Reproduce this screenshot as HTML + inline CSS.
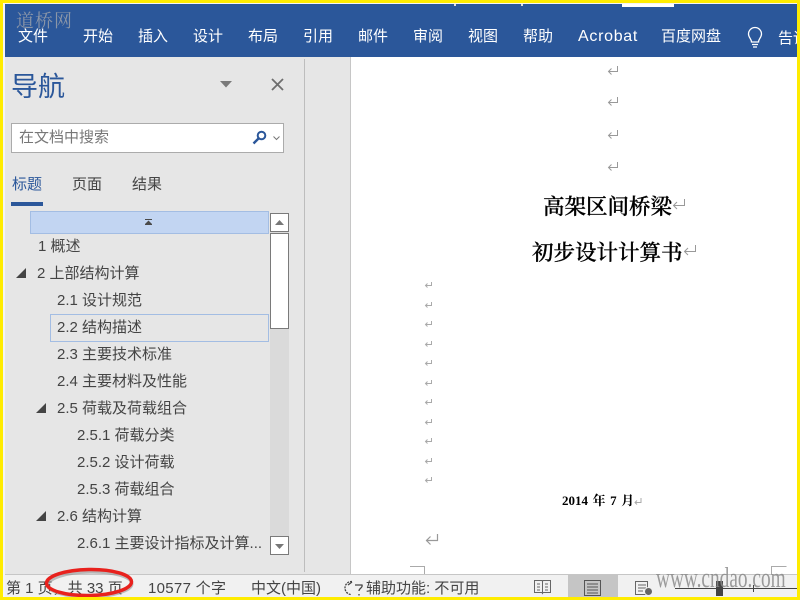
<!DOCTYPE html>
<html><head><meta charset="utf-8">
<style>
*{box-sizing:border-box;margin:0;padding:0}
html,body{width:800px;height:600px;overflow:hidden;background:#fff}
body{position:relative;font-family:"Liberation Sans","Noto Sans CJK SC",sans-serif;color:#444}
.a{position:absolute;white-space:nowrap}
.r{top:28px;font-size:15px;line-height:18px;color:#fff}
.t{font-size:15px;line-height:18px;color:#444;margin-top:1px}
.s{top:580px;font-size:15px;line-height:18px;color:#444}
.doc{font-family:"Liberation Serif","Noto Serif CJK SC",serif;color:#000}
svg{position:absolute;overflow:visible}
</style></head><body>

<!-- ribbon -->
<div class="a" style="left:5px;top:4px;width:792px;height:53px;background:#2b579a"></div>
<div class="a" style="left:622px;top:4px;width:52px;height:3px;background:#fff"></div>
<div class="a" style="left:454px;top:4px;width:2px;height:2px;background:#ddd"></div>
<div class="a" style="left:521px;top:4px;width:2px;height:2px;background:#ddd"></div>
<div class="a" style="left:16px;top:9px;font:18px/22px 'Noto Serif CJK SC',serif;color:#8b96a8;letter-spacing:1px">道桥网</div>
<div class="a r" style="left:18px">文件</div>
<div class="a r" style="left:83px">开始</div>
<div class="a r" style="left:138px">插入</div>
<div class="a r" style="left:193px">设计</div>
<div class="a r" style="left:248px">布局</div>
<div class="a r" style="left:303px">引用</div>
<div class="a r" style="left:358px">邮件</div>
<div class="a r" style="left:413px">审阅</div>
<div class="a r" style="left:468px">视图</div>
<div class="a r" style="left:523px">帮助</div>
<div class="a r" style="left:578px;font-size:16px;letter-spacing:.7px">Acrobat</div>
<div class="a r" style="left:661px">百度网盘</div>
<svg style="left:746px;top:27px" width="18" height="22" viewBox="0 0 18 22" fill="none" stroke="#fff" stroke-width="1.3"><path d="M5.5 15c0-3-3-4.500-3-8a6.500 6.500 0 0 1 13 0c0 3.500-3 5-3 8z"/><path d="M6 17.500h6M7 20h4"/></svg>
<div class="a r" style="left:778px;top:30px;width:19px;overflow:hidden">告诉</div>

<!-- nav pane -->
<div class="a" style="left:5px;top:57px;width:346px;height:517px;background:#e6e6e6"></div>
<div class="a" style="left:304px;top:59px;width:1px;height:513px;background:#bdbdbd"></div>
<div class="a" style="left:350px;top:57px;width:1px;height:517px;background:#c6c6c6"></div>
<div class="a" style="left:11px;top:70px;font-size:27px;line-height:34px;color:#2b579a">导航</div>
<svg style="left:220px;top:81px" width="12" height="7"><path d="M0 0h12L6 6.500z" fill="#7a7a7a"/></svg>
<svg style="left:271px;top:78px" width="13" height="13" fill="none" stroke="#6e6e6e" stroke-width="1.800"><path d="M1 1l11 11M12 1L1 12"/></svg>

<div class="a" style="left:11px;top:123px;width:273px;height:30px;background:#fff;border:1px solid #ababab"></div>
<div class="a" style="left:19px;top:128px;font-size:15px;line-height:20px;color:#777">在文档中搜索</div>
<svg style="left:252px;top:130px" width="16" height="15" fill="none" stroke="#2b579a"><circle cx="9.500" cy="5.500" r="3.800" stroke-width="2"/><path d="M6.500 8.500L1.500 13.500" stroke-width="2.400"/></svg>
<svg style="left:273px;top:136px" width="7" height="5" fill="none" stroke="#777"><path d="M.5.500L3.500 3.500 6.500.500"/></svg>

<div class="a" style="left:12px;top:176px;font-size:15px;line-height:18px;color:#2b579a">标题</div>
<div class="a" style="left:72px;top:176px;font-size:15px;line-height:18px;color:#444">页面</div>
<div class="a" style="left:132px;top:176px;font-size:15px;line-height:18px;color:#444">结果</div>
<div class="a" style="left:11px;top:202px;width:32px;height:4px;background:#2b579a"></div>

<!-- list -->
<div class="a" style="left:30px;top:211px;width:239px;height:23px;background:#c2d5f2;border:1px solid #a3bde3"></div>
<svg style="left:145px;top:219px" width="7" height="6"><path d="M0 0h7v1H0zM3.500 1.500L7 5H0zM0 5h7v1H0z" fill="#4a4a4a"/></svg>
<div class="a" style="left:50px;top:314px;width:219px;height:28px;border:1px solid #a3bde3"></div>

<div class="a t" style="left:38px;top:237px">1 概述</div>
<svg style="left:16px;top:268px" width="10" height="10"><path d="M10 0v10H0z" fill="#444"/></svg>
<div class="a t" style="left:37px;top:264px">2 上部结构计算</div>
<div class="a t" style="left:57px;top:291px">2.1 设计规范</div>
<div class="a t" style="left:57px;top:318px">2.2 结构描述</div>
<div class="a t" style="left:57px;top:345px">2.3 主要技术标准</div>
<div class="a t" style="left:57px;top:372px">2.4 主要材料及性能</div>
<svg style="left:36px;top:403px" width="10" height="10"><path d="M10 0v10H0z" fill="#444"/></svg>
<div class="a t" style="left:57px;top:399px">2.5 荷载及荷载组合</div>
<div class="a t" style="left:77px;top:426px">2.5.1 荷载分类</div>
<div class="a t" style="left:77px;top:453px">2.5.2 设计荷载</div>
<div class="a t" style="left:77px;top:480px">2.5.3 荷载组合</div>
<svg style="left:36px;top:511px" width="10" height="10"><path d="M10 0v10H0z" fill="#444"/></svg>
<div class="a t" style="left:57px;top:507px">2.6 结构计算</div>
<div class="a t" style="left:77px;top:534px">2.6.1 主要设计指标及计算...</div>

<!-- scrollbar -->
<div class="a" style="left:270px;top:213px;width:19px;height:342px;background:#dadada"></div>
<div class="a" style="left:270px;top:213px;width:19px;height:19px;background:#fff;border:1px solid #7a7a7a"></div>
<svg style="left:275px;top:220px" width="9" height="5"><path d="M0 5L4.500 0 9 5z" fill="#777"/></svg>
<div class="a" style="left:270px;top:233px;width:19px;height:96px;background:#fff;border:1px solid #7a7a7a"></div>
<div class="a" style="left:270px;top:536px;width:19px;height:19px;background:#fff;border:1px solid #7a7a7a"></div>
<svg style="left:275px;top:544px" width="9" height="5"><path d="M0 0L4.500 5 9 0z" fill="#777"/></svg>

<!-- document -->
<svg style="left:607px;top:66px" width="12" height="10" fill="none" stroke="#999" stroke-width="1"><path d="M10.500 0v5.500H1.500M4.500 2.500L1.500 5.500l3 3"/></svg>
<svg style="left:607px;top:97px" width="12" height="10" fill="none" stroke="#999" stroke-width="1"><path d="M10.500 0v5.500H1.500M4.500 2.500L1.500 5.500l3 3"/></svg>
<svg style="left:607px;top:130px" width="12" height="10" fill="none" stroke="#999" stroke-width="1"><path d="M10.500 0v5.500H1.500M4.500 2.500L1.500 5.500l3 3"/></svg>
<svg style="left:607px;top:162px" width="12" height="10" fill="none" stroke="#999" stroke-width="1"><path d="M10.500 0v5.500H1.500M4.500 2.500L1.500 5.500l3 3"/></svg>

<div class="a doc" style="left:543px;top:193px;font-size:21.500px;line-height:28px;font-weight:500;-webkit-text-stroke:.35px #000">高架区间桥梁</div>
<svg style="left:672px;top:199px" width="14" height="12" fill="none" stroke="#999" stroke-width="1"><path d="M12.500 0v6.500H1.500M5 3L1.500 6.500 5 10"/></svg>
<div class="a doc" style="left:532px;top:239px;font-size:21.500px;line-height:28px;font-weight:500;-webkit-text-stroke:.35px #000">初步设计计算书</div>
<svg style="left:683px;top:245px" width="14" height="12" fill="none" stroke="#999" stroke-width="1"><path d="M12.500 0v6.500H1.500M5 3L1.500 6.500 5 10"/></svg>

<svg style="left:425px;top:1px" width="8" height="500" fill="none" stroke="#aaa" stroke-width="1"><path d="M6.500 281v3.500H.500M2.500 282.500l-2 2 2 2M6.500 301v3.500H.500M2.500 302.500l-2 2 2 2M6.500 320v3.500H.500M2.500 321.500l-2 2 2 2M6.500 340v3.500H.500M2.500 341.500l-2 2 2 2M6.500 359v3.500H.500M2.500 360.500l-2 2 2 2M6.500 379v3.500H.500M2.500 380.500l-2 2 2 2M6.500 398v3.500H.500M2.500 399.500l-2 2 2 2M6.500 418v3.500H.500M2.500 419.500l-2 2 2 2M6.500 437v3.500H.500M2.500 438.500l-2 2 2 2M6.500 457v3.500H.500M2.500 458.500l-2 2 2 2M6.500 476v3.500H.500M2.500 477.500l-2 2 2 2"/></svg>

<div class="a doc" style="left:562px;top:493px;font-size:13px;line-height:16px;font-weight:700;word-spacing:1.300px">2014 年 7 月</div>
<svg style="left:634px;top:498px" width="8" height="8" fill="none" stroke="#aaa"><path d="M7 0v4.500H1M3 2.500L1 4.500l2 2"/></svg>
<svg style="left:425px;top:534px" width="14" height="12" fill="none" stroke="#999" stroke-width="1.200"><path d="M12.500 0v6.500H1M5.500 2.500L1.500 6.500l4 4"/></svg>
<svg style="left:410px;top:566px" width="16" height="8" fill="none" stroke="#aaa"><path d="M0 .500h14.500V8"/></svg>
<svg style="left:771px;top:566px" width="16" height="8" fill="none" stroke="#aaa"><path d="M15.500 .500H.500V8"/></svg>

<!-- status bar -->
<div class="a" style="left:5px;top:574px;width:792px;height:23px;background:#f1f1f1;border-top:1px solid #c6c6c6"></div>
<div class="a s" style="left:6px">第 1 页，共 33 页</div>
<div class="a s" style="left:148px;letter-spacing:.3px">10577 个字</div>
<div class="a s" style="left:251px">中文(中国)</div>
<svg style="left:345px;top:580px" width="19" height="17" fill="none" stroke="#444" stroke-width="1.300"><path d="M7 1.500a6.500 6.500 0 0 0-1 13" stroke-dasharray="2 1"/><path d="M3 5l4-3M10 5h7c1 3-3 3-3 6M14 14v1.500"/></svg>
<div class="a s" style="left:366px">辅助功能: 不可用</div>
<svg style="left:534px;top:580px" width="17" height="15" fill="none" stroke="#666"><path d="M.500 .500h7.500l.500 1 .500-1h7.500v12H9l-.500 1-.500-1H.500zM8.500 1.500v11M3 4h3M3 7h3M3 10h3M11 4h3M11 7h3M11 10h3"/></svg>
<div class="a" style="left:568px;top:575px;width:50px;height:22px;background:#c5c5c5"></div>
<svg style="left:584px;top:580px" width="17" height="16" fill="none" stroke="#555"><path d="M.500 .500h16v15H.500zM3 4h11M3 7h11M3 10h11M3 13h11"/></svg>
<svg style="left:635px;top:581px" width="18" height="15" fill="none" stroke="#666"><path d="M.500 .500h12v13H.500zM3 4h8M3 7h8M3 10h5"/><circle cx="13.500" cy="10.500" r="4" fill="#666" stroke="#f1f1f1"/></svg>
<div class="a" style="left:675px;top:588px;width:122px;height:1px;background:#444"></div>
<div class="a" style="left:716px;top:581px;width:7px;height:15px;background:#444"></div>
<div class="a" style="left:753px;top:585px;width:1px;height:7px;background:#444"></div>
<div class="a" style="left:656px;top:562px;font:28px/34px 'Liberation Serif',serif;color:#8b8b8b;transform:scaleX(.69);transform-origin:0 0;opacity:.85">www.cndao.com</div>

<!-- red ellipse -->
<svg style="left:0;top:0" width="800" height="600" fill="none"><ellipse cx="90" cy="584.500" rx="42" ry="12.500" stroke="#888" stroke-width="3" opacity=".5" transform="rotate(-1 90 584)"/><ellipse cx="89" cy="582.500" rx="42.500" ry="13" stroke="#e8211d" stroke-width="3.500" transform="rotate(-1 89 582)"/></svg>

<!-- yellow frame -->
<div class="a" style="left:0;top:0;width:800px;height:600px;border:3px solid #ffec00"></div>
<div class="a" style="left:3px;top:3px;width:2px;height:594px;background:#f4f4f4"></div>
<div class="a" style="left:3px;top:3px;width:794px;height:1px;background:#f4f4f4"></div>
</body></html>
